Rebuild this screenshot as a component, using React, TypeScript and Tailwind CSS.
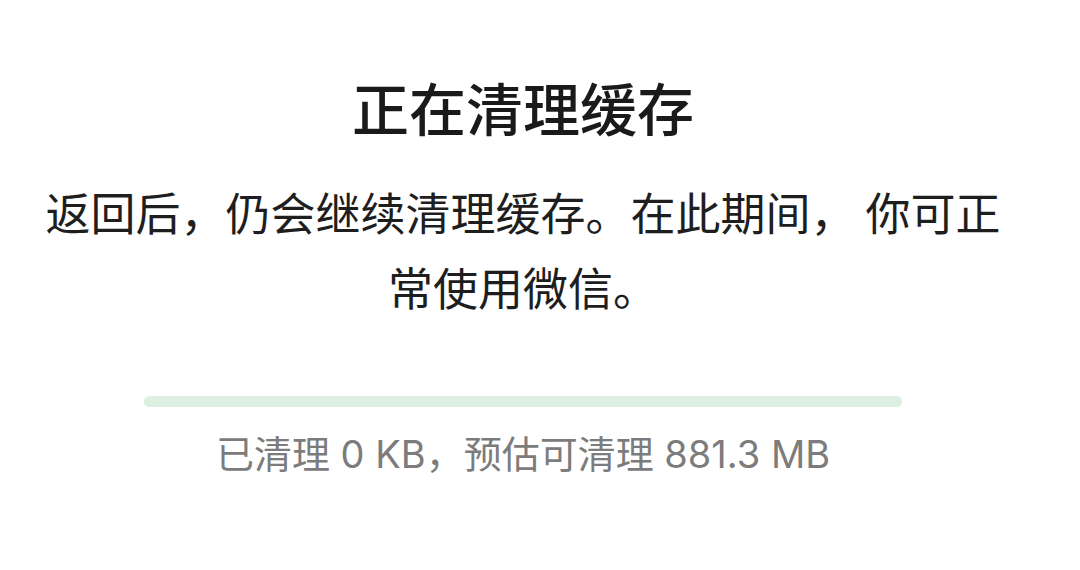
import React from "react";

export default function App() {
  return (
    <div
      className="w-[1080px] h-[570px] bg-white flex flex-col items-center pr-[34px]"
      style={{ fontFamily: '"Noto Sans CJK SC", "Noto Sans", sans-serif' }}
    >
      <h1 className="mt-[78px] text-[57px] leading-[56px] font-medium text-[#1a1a1a]">
        正在清理缓存
      </h1>
      <p className="mt-[40px] w-[1000px] text-center text-[45px] leading-[75px] text-[#1e1e1e]">
        返回后，仍会继续清理缓存。在此期间， 你可正
        <br />
        常使用微信。
      </p>
      <div className="mt-[72px] w-[758px] h-[11px] rounded-full bg-[#dcefe0]" />
      <p
        className="mt-[28px] text-[38px] leading-[38px] text-[#7c7c7c]"
        style={{ fontFamily: 'Inter, "Noto Sans CJK SC", sans-serif' }}
      >
        已清理 0 KB，预估可清理 881.3 MB
      </p>
    </div>
  );
}
